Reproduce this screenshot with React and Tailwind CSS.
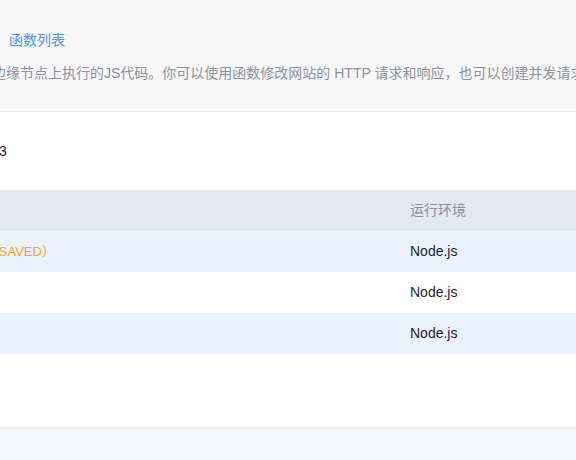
import React from "react";

const rows = [
  { name: "（UNSAVED）", runtime: "Node.js", unsaved: true },
  { name: "", runtime: "Node.js" },
  { name: "", runtime: "Node.js" },
];

const App = () => {
  return (
    <div className="w-[576px] h-[460px] overflow-hidden bg-[#f7f8f9] font-['Liberation_Sans','Noto_Sans_CJK_SC',sans-serif]">
      <div className="h-[112px] bg-[#f7f7f8] border-b border-[#ebedf0] overflow-hidden">
        <div className="flex items-center h-[18px] mt-[31px] text-[14px] leading-[18px] whitespace-nowrap">
          <span className="ml-[-5px] text-[#c3c8d0]">/</span>
          <span className="ml-[10px] text-[#4d94f5]">函数列表</span>
        </div>
        <p className="mt-[15px] ml-[-8px] text-[14px] leading-[18px] text-[#8c93a1] whitespace-nowrap">
          边缘节点上执行的JS代码。你可以使用函数修改网站的 HTTP 请求和响应，也可以创建并发请求
        </p>
      </div>

      <div className="h-[317px] bg-white border-b-2 border-[#eef0f1] overflow-hidden">
        <div className="mt-[30px] h-[18px] ml-[-1px] text-[14px] leading-[18px] text-[#1f2329]">
          3
        </div>

        <div className="mt-[30px]">
          <div className="flex items-center h-[41px] bg-[#e4e8f1] text-[14px] text-[#8a91a0]">
            <div className="w-[410px]"></div>
            <div className="flex-1">运行环境</div>
          </div>
          {rows.map((row, id) => (
            <div
              key={id}
              className={`flex items-center h-[41px] text-[14px] ${
                id % 2 === 0 ? "bg-[#eaf2fe]" : "bg-white"
              }`}
            >
              <div className="w-[410px] overflow-hidden whitespace-nowrap">
                {row.unsaved && (
                  <span className="inline-block ml-[-33px] text-[13px] text-[#f5a623]">
                    {row.name}
                  </span>
                )}
              </div>
              <div className="flex-1 text-[#1f2329]">{row.runtime}</div>
            </div>
          ))}
        </div>
      </div>
    </div>
  );
};

export default App;
